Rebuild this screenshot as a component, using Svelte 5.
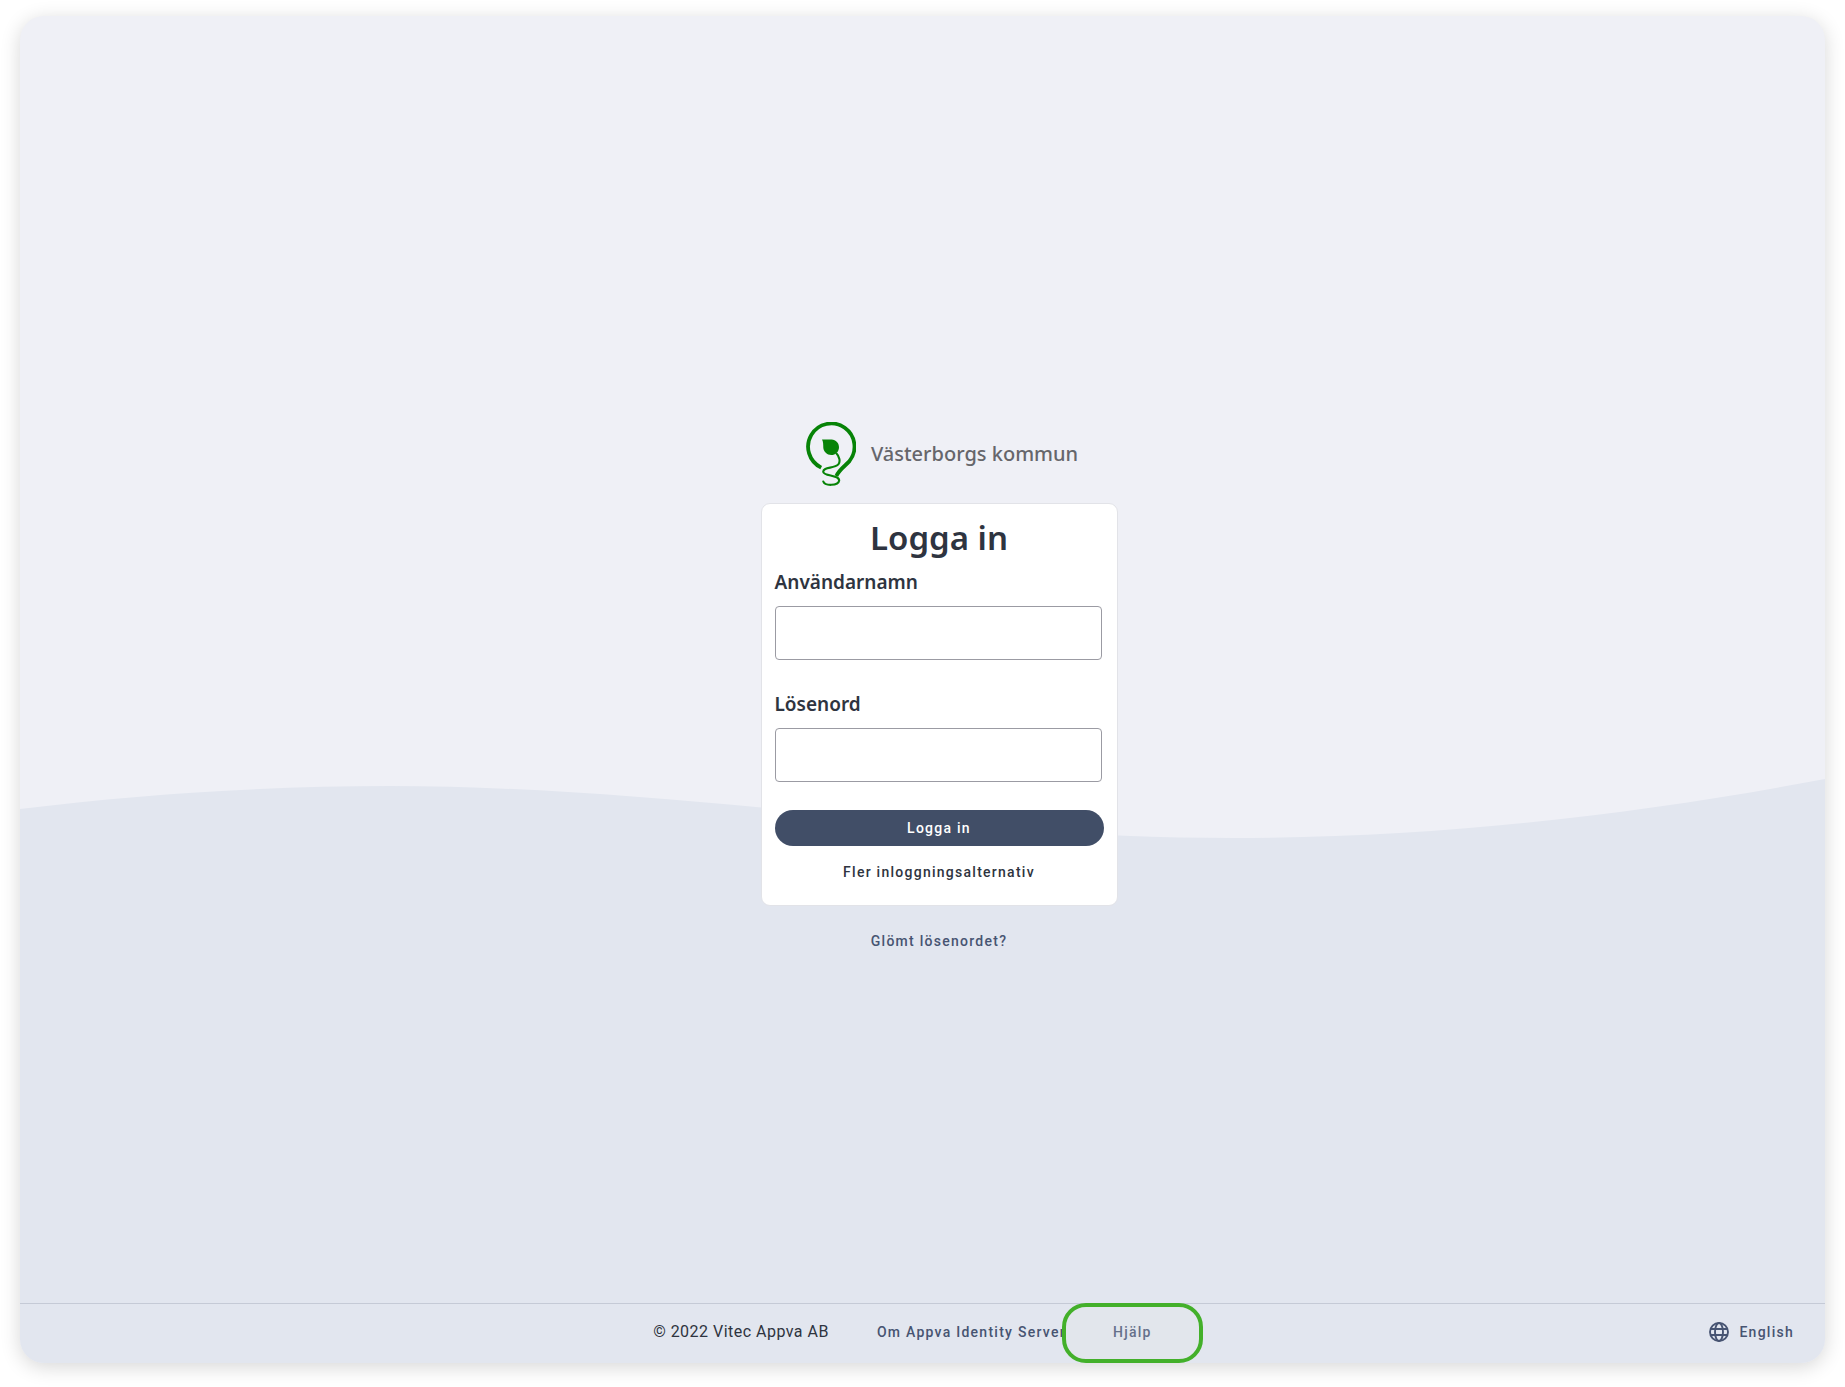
<script>
  let username = $state('');
  let password = $state('');
</script>

<div class="screen">
  <svg class="wave" viewBox="0 0 1805 1347" preserveAspectRatio="none" aria-hidden="true">
    <path d="M0 793C120 778 250 770 370 770C650 770 930 822 1213 822C1420 822 1620 798 1805 763V1347H0Z" fill="#e2e6ef" />
  </svg>

  <main>
    <header class="brand">
      <svg class="logo" viewBox="0 0 50 64" fill="none" stroke="#078307" aria-hidden="true">
        <path d="M15.2 45.6A23.2 23.2 0 1 1 43 39.7C39 43.8 32.8 48.2 30.4 54" stroke-width="3.8" />
        <path d="M16 17.5H25.5C30 18 33 21 33 25.2C33 29.6 29.6 33 25.2 33C21 33 17.6 29.8 17.3 25.8C17.2 22.4 17.3 20 16 17.5Z" fill="#078307" stroke="none" />
        <path d="M30.5 31.5C33.5 34.5 34.5 39.5 32.5 42.2C28.5 47 17.2 44.4 17.2 49.8C17.8 54.4 33.2 52.6 33.2 58.5C32.2 64.2 18.5 64 17.3 59.5" stroke-width="2.1" stroke-linecap="round" />
      </svg>
      <span>Västerborgs kommun</span>
    </header>

    <form class="card" onsubmit={(e) => e.preventDefault()}>
      <h1>Logga in</h1>
      <label for="username">Användarnamn</label>
      <input id="username" type="text" bind:value={username} />
      <label for="password">Lösenord</label>
      <input id="password" type="password" bind:value={password} />
      <button type="submit">Logga in</button>
      <a class="more" href="#alternativ">Fler inloggningsalternativ</a>
    </form>

    <a class="forgot" href="#losenord">Glömt lösenordet?</a>
  </main>

  <footer>
    <div class="info">
      <span class="copyright">© 2022 Vitec Appva AB</span>
      <a class="about" href="#om">Om Appva Identity Server</a>
      <a class="help" href="#hjalp">Hjälp</a>
    </div>
    <button class="language" type="button">
      <svg viewBox="0 0 20 20" fill="none" stroke="currentColor" stroke-width="1.9" aria-hidden="true">
        <circle cx="10" cy="10" r="9" />
        <ellipse cx="10" cy="10" rx="4" ry="9" />
        <path d="M1.8 7H18.2M1.8 13H18.2" />
      </svg>
      English
    </button>
  </footer>
</div>

<style>
  :global(body) {
    margin: 0;
    background: #fff;
  }

  .screen {
    position: relative;
    box-sizing: border-box;
    display: flex;
    flex-direction: column;
    min-height: calc(100vh - 40px);
    margin: 16px 20px 24px;
    border-radius: 24px;
    background: #eff0f6;
    box-shadow: 0 4px 20px rgba(0, 0, 0, 0.16);
    color: #2e3440;
    font-family: Roboto, "Liberation Sans", sans-serif;
    font-size: 14px;
    font-weight: 500;
    letter-spacing: 0.09em;
  }

  .wave {
    position: absolute;
    inset: 0;
    width: 100%;
    height: 100%;
    border-radius: 24px;
  }

  main {
    position: relative;
    flex: 1;
    display: flex;
    flex-direction: column;
    align-items: center;
    justify-content: center;
    padding: 53px 0 0 33px;
  }

  .brand {
    display: flex;
    align-items: center;
    gap: 15px;
    margin: 0 0 17px 6px;
    color: #66666b;
    font: 500 20px/28px "Noto Sans", sans-serif;
    letter-spacing: normal;
  }

  .logo {
    width: 50px;
    height: 64px;
  }

  .card {
    box-sizing: border-box;
    display: flex;
    flex-direction: column;
    width: 357px;
    max-width: 100%;
    padding: 12px 13px 23px;
    border: 1px solid #e2e3e8;
    border-radius: 9px;
    background: #fff;
  }

  h1 {
    margin: 0;
    font: 600 33px/44px "Noto Sans", sans-serif;
    letter-spacing: normal;
    text-align: center;
  }

  label {
    margin-bottom: 10px;
    font: 600 19px/28px "Noto Sans", sans-serif;
    letter-spacing: normal;
  }

  h1 + label {
    margin-top: 8px;
  }

  input {
    box-sizing: border-box;
    height: 54px;
    margin: 0 2px 30px 0;
    padding: 0 12px;
    border: 1px solid #9b9ba3;
    border-radius: 4px;
    background: #fff;
    font: 400 16px/24px Roboto, sans-serif;
  }

  #password {
    margin-bottom: 28px;
  }

  button {
    padding: 0;
    border: 0;
    font: inherit;
    letter-spacing: inherit;
    cursor: pointer;
  }

  .card button {
    height: 36px;
    border-radius: 18px;
    background: #414e67;
    color: #fff;
  }

  a {
    color: #475472;
    line-height: 20px;
    text-decoration: none;
  }

  .more {
    align-self: center;
    margin-top: 16px;
    color: #2e3440;
  }

  .forgot {
    margin-top: 25px;
  }

  footer {
    position: relative;
    display: grid;
    grid-template-columns: 1fr auto 1fr;
    align-items: center;
    height: 60px;
    padding: 0 31px 0 42px;
    box-shadow: inset 0 1px #c5cad6;
  }

  .info {
    grid-column: 2;
    display: flex;
    align-items: center;
  }

  .copyright,
  .about,
  .language {
    padding-bottom: 2px;
  }

  .copyright {
    margin-right: 48px;
    font-size: 16px;
    font-weight: 400;
    line-height: 24px;
    letter-spacing: 0.03em;
  }

  .help {
    box-sizing: border-box;
    z-index: 1;
    width: 141px;
    height: 60px;
    margin-left: -4px;
    border: 4px solid #43b02a;
    border-radius: 24px;
    background: #e2e6ec;
    color: #65708a;
    line-height: 50px;
    text-align: center;
  }

  .language {
    grid-column: 3;
    justify-self: end;
    display: flex;
    align-items: center;
    gap: 10px;
    background: none;
    color: #475472;
  }

  .language svg {
    width: 20px;
    height: 20px;
  }
</style>
